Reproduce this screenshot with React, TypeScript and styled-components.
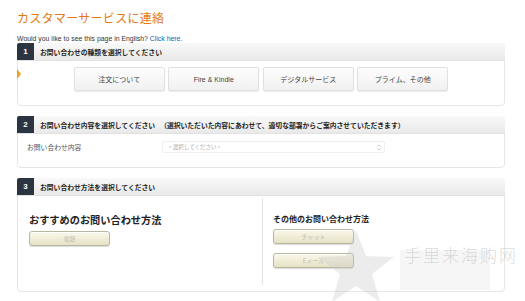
import React from "react";
import styled, { createGlobalStyle } from "styled-components";

const Global = createGlobalStyle`
  html, body { margin: 0; padding: 0; background: #fff; }
  body { font-family: "Liberation Sans", "Noto Sans CJK JP", sans-serif; color: #333; }
`;

const Page = styled.div`
  position: relative;
  width: 525px;
  height: 301px;
  overflow: hidden;
  padding: 10px 0 0 17px;
  box-sizing: border-box;
`;

const Title = styled.h1`
  margin: 0;
  font-family: "Noto Sans CJK JP", sans-serif;
  font-weight: 400;
  font-size: 12px;
  letter-spacing: 0.3px;
  line-height: 15px;
  color: #e47911;
`;

const EnglishLine = styled.div`
  margin-top: 10px;
  font-size: 6.9px;
  line-height: 8px;
  color: #333;
  a { color: #0066c0; text-decoration: none; }
`;

const Section = styled.section<{ $mt?: number }>`
  width: 488px;
  margin-top: ${(p) => p.$mt ?? 10}px;
  border: 1px solid #e6e6e6;
  border-radius: 4px;
  box-sizing: border-box;
  background: #fff;
`;

const Header = styled.div`
  display: flex;
  align-items: center;
  height: 17px;
  margin: -1px -1px 0 -1px;
  background: linear-gradient(#f9f9f9, #e9e9e9);
  border-radius: 4px 4px 0 0;
  border-bottom: 1px solid #e2e2e2;
`;

const Num = styled.div`
  width: 17px;
  height: 17px;
  background: #2b3541;
  color: #fff;
  font-weight: 700;
  font-size: 8px;
  display: flex;
  align-items: center;
  justify-content: center;
  border-radius: 2px 0 0 0;
`;

const HeaderText = styled.div`
  margin-left: 6px;
  font-family: "Noto Sans CJK JP", sans-serif;
  font-weight: 700;
  font-size: 6.8px;
  color: #222;
  white-space: nowrap;
  span { margin-left: 5px; }
`;

const TypeBody = styled.div`
  position: relative;
  height: 44px;
  display: flex;
  justify-content: center;
  padding-top: 6px;
  box-sizing: border-box;
`;

const Marker = styled.div`
  position: absolute;
  left: -1px;
  top: 8px;
  width: 0;
  height: 0;
  border-top: 5px solid transparent;
  border-bottom: 5px solid transparent;
  border-left: 4px solid #f0a117;
`;

const Choices = styled.div`
  display: flex;
  gap: 3.5px;
`;

const Choice = styled.button`
  width: 91px;
  height: 24px;
  border: 1px solid #e0e0e0;
  border-radius: 2px;
  background: linear-gradient(#fdfdfd, #f1f1f1);
  box-shadow: 0 1px 1px rgba(0,0,0,0.08);
  font-family: "Liberation Sans", "Noto Sans CJK JP", sans-serif;
  font-size: 7px;
  color: #444;
  padding: 0;
`;

const ContentBody = styled.div`
  height: 33px;
  display: flex;
  align-items: flex-start;
  padding: 7px 0 0 9px;
  box-sizing: border-box;
`;

const Label = styled.div`
  width: 135px;
  font-family: "Noto Sans CJK JP", sans-serif;
  font-size: 6.8px;
  line-height: 12px;
  color: #555;
`;

const Select = styled.div`
  width: 223px;
  height: 12px;
  border: 1px solid #f0f0f0;
  border-radius: 2px;
  box-sizing: border-box;
  display: flex;
  align-items: center;
  justify-content: space-between;
  padding: 0 3px 0 6px;
  font-family: "Noto Sans CJK JP", sans-serif;
  font-size: 5.5px;
  color: #aaa;
`;

const MethodBody = styled.div`
  height: 95px;
  display: grid;
  grid-template-columns: 244px 1fr;
`;

const Col = styled.div<{ $divider?: boolean }>`
  padding: ${(p) => (p.$divider ? "16px 0 0 10px" : "15px 0 0 11px")};
  margin: 2px 0 6px;
  border-left: ${(p) => (p.$divider ? "1px solid #e2e2e2" : "none")};
  display: flex;
  flex-direction: column;
  align-items: flex-start;
`;

const BigHeading = styled.div`
  font-family: "Noto Sans CJK JP", sans-serif;
  font-weight: 700;
  font-size: 10.2px;
  line-height: 13px;
  color: #222;
`;

const SmallHeading = styled.div`
  font-family: "Noto Sans CJK JP", sans-serif;
  font-weight: 700;
  font-size: 8px;
  line-height: 10px;
  color: #222;
`;

const MethodButton = styled.button<{ $mt: number }>`
  margin-top: ${(p) => p.$mt}px;
  width: 81px;
  height: 15px;
  padding: 0;
  border: 1px solid #b9b6a0;
  border-radius: 3px;
  background: linear-gradient(#faf8ea, #e6e2c6);
  box-shadow: 0 1px 1px rgba(0,0,0,0.15), inset 0 1px 0 #fff;
  font-family: "Noto Sans CJK JP", sans-serif;
  font-size: 6px;
  color: #bdbdb0;
`;

const Watermark = styled.div`
  position: absolute;
  left: 316px;
  top: 228px;
  pointer-events: none;
`;

const WaterBlock = styled.div`
  position: absolute;
  left: 84px;
  top: 22px;
  width: 90px;
  height: 40px;
  background: rgba(235,235,235,0.45);
`;

const WaterText = styled.div`
  position: absolute;
  left: 88px;
  top: 14px;
  white-space: nowrap;
  font-family: "Noto Sans CJK SC", sans-serif;
  font-weight: 300;
  font-size: 17px;
  letter-spacing: 2px;
  color: rgba(190,190,190,0.55);
`;

export default function App() {
  return (
    <>
      <Global />
      <Page>
        <Title>カスタマーサービスに連絡</Title>
        <EnglishLine>
          Would you like to see this page in English? <a href="#">Click here.</a>
        </EnglishLine>

        <Section $mt={0}>
          <Header>
            <Num>1</Num>
            <HeaderText>お問い合わせの種類を選択してください</HeaderText>
          </Header>
          <TypeBody>
            <Marker />
            <Choices>
              <Choice>注文について</Choice>
              <Choice>Fire &amp; Kindle</Choice>
              <Choice>デジタルサービス</Choice>
              <Choice>プライム、その他</Choice>
            </Choices>
          </TypeBody>
        </Section>

        <Section>
          <Header>
            <Num>2</Num>
            <HeaderText>
              お問い合わせ内容を選択してください
              <span>（選択いただいた内容にあわせて、適切な部署からご案内させていただきます）</span>
            </HeaderText>
          </Header>
          <ContentBody>
            <Label>お問い合わせ内容</Label>
            <Select>
              <span>« 選択してください »</span>
              <svg width="4" height="7" viewBox="0 0 4 7">
                <path d="M0.5 2.5 L2 1 L3.5 2.5 M0.5 4.5 L2 6 L3.5 4.5" stroke="#bbb" strokeWidth="0.7" fill="none" />
              </svg>
            </Select>
          </ContentBody>
        </Section>

        <Section>
          <Header>
            <Num>3</Num>
            <HeaderText>お問い合わせ方法を選択してください</HeaderText>
          </Header>
          <MethodBody>
            <Col>
              <BigHeading>おすすめのお問い合わせ方法</BigHeading>
              <MethodButton $mt={5}>電話</MethodButton>
            </Col>
            <Col $divider>
              <SmallHeading>その他のお問い合わせ方法</SmallHeading>
              <MethodButton $mt={5}>チャット</MethodButton>
              <MethodButton $mt={9}>Eメール</MethodButton>
            </Col>
          </MethodBody>
        </Section>

        <Watermark>
          <svg width="80" height="76" viewBox="0 0 80 76">
            <polygon
              points="40,2 50,28 78,29 56,46 64,74 40,58 16,74 24,46 2,29 30,28"
              fill="rgba(200,200,200,0.35)"
            />
          </svg>
          <WaterBlock />
          <WaterText>手里来海购网</WaterText>
        </Watermark>
      </Page>
    </>
  );
}
